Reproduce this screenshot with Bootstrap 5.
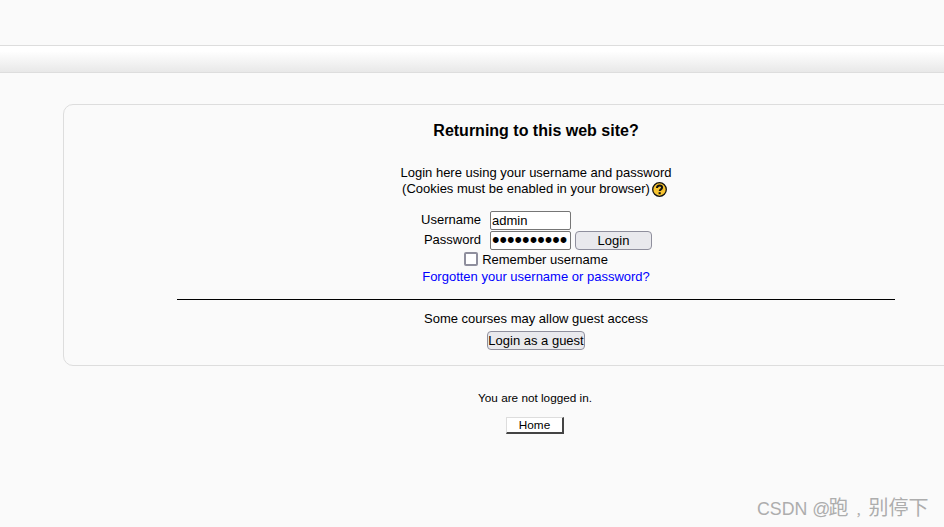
<!DOCTYPE html>
<html lang="en">
<head>
  <meta charset="UTF-8" />
  <meta name="viewport" content="width=device-width, initial-scale=1.0"/>
  <title>Login to the site</title>
  <link href="https://cdn.jsdelivr.net/npm/bootstrap@5.3.0/dist/css/bootstrap.min.css" rel="stylesheet"/>
  <style>
    html, body {
      height: 527px;
      overflow: hidden;
    }
    body {
      background-color: #fafafa;
      color: #000;
      font-family: "Liberation Sans", Arial, sans-serif;
      font-size: 13px;
      line-height: 16px;
    }
    .top-strip {
      height: 46px;
      border-bottom: 1px solid #ddd;
    }
    .crumb-strip {
      height: 27px;
      background: linear-gradient(#fff 0, #fff 20%, #e8e8e8 100%);
      border-bottom: 1px solid #ddd;
    }
    .login-panel {
      width: 946px;
      height: 262px;
      margin: 31px 0 0 63px;
      background: #fafafa;
      border: 1px solid #ddd;
      border-radius: 10px;
      padding-top: 16px;
      text-align: center;
    }
    .login-panel h2 {
      font-size: 16px;
      font-weight: 700;
      line-height: 19px;
      margin: 0 0 25px;
      font-family: inherit;
    }
    .login-intro {
      margin-bottom: 14px;
    }
    .help-mark {
      display: inline-block;
      vertical-align: -4px;
      margin: 0 3px 0 2px;
    }
    .field-rows {
      display: grid;
      grid-template-columns: 84px 81px 77px;
      column-gap: 4px;
      row-gap: 1px;
      margin-left: 338px;
      width: 260px;
      align-items: center;
    }
    .field-rows label {
      text-align: right;
      margin: -2px 5px 0 0;
    }
    .field-box {
      width: 81px;
      height: 19px;
      border: 1px solid #767676;
      border-radius: 2px;
      background: #fff;
      padding: 0 1px;
      font: 13px "Liberation Sans", Arial, sans-serif;
      color: #000;
      outline: 0;
    }
    .field-box[type=password] {
      font-size: 21.5px;
    }
    .plain-btn {
      height: 19px;
      padding: 0;
      font: 13px "Liberation Sans", Arial, sans-serif;
      line-height: 15px;
      color: #000;
      background: #e9e9ed;
      border: 1px solid #8f8f9d;
      border-radius: 4px;
      white-space: nowrap;
    }
    .field-spacer {
      height: 19px;
    }
    .remember-row {
      display: flex;
      justify-content: center;
      align-items: center;
      gap: 4px;
      height: 18px;
    }
    .remember-row label {
      padding-top: 1px;
    }
    .remember-box {
      appearance: none;
      width: 14px;
      height: 14px;
      border: 2px solid #8f8f9d;
      border-radius: 2px;
      background: #fff;
      margin: 0;
    }
    .forgot-link {
      display: block;
      color: #00f;
      text-decoration: none;
      height: 18px;
      line-height: 17px;
    }
    .panel-rule {
      width: 718px;
      height: 1px;
      background: #000;
      margin: 13px auto 0;
    }
    .guest-note {
      margin: 11px 0 4px;
      line-height: 16px;
    }
    .guest-btn {
      width: 98px;
    }
    .page-foot {
      width: 1070px;
      margin-top: 24px;
      text-align: center;
      font-size: 11.75px;
      line-height: 16px;
    }
    .home-btn {
      display: block;
      width: 58px;
      height: 17px;
      margin: 11px auto 0;
      padding: 0 0 1px;
      background: #fff;
      font: 11.75px/13px "Liberation Sans", Arial, sans-serif;
      color: #000;
      border: 1px solid #ddd;
      border-right: 2px solid #444;
      border-bottom: 2px solid #444;
    }
    .mark-csdn {
      position: absolute;
      left: 757px;
      top: 497px;
      font: 17.8px/22px "Liberation Sans", "Noto Sans CJK SC", sans-serif;
      color: #adadad;
      white-space: nowrap;
    }
    .mark-csdn em {
      font-style: normal;
      letter-spacing: -2px;
    }
    .mark-csdn span {
      font-size: 20px;
    }
    .mark-csdn i {
      font-style: normal;
      font-size: 13px;
      padding-left: 7px;
    }
  </style>
</head>
<body>

  <div class="top-strip"></div>
  <div class="crumb-strip"></div>

  <!-- Login box -->
  <div class="login-panel">
    <h2>Returning to this web site?</h2>
    <div class="login-intro">
      Login here using your username and password<br>
      (Cookies must be enabled in your browser)<svg class="help-mark" width="15" height="15" viewBox="0 0 15 15"><circle cx="7.500" cy="7.500" r="6.800" fill="#f7c430" stroke="#111" stroke-width="1.300"/><path d="M5 5.900c0-1.600 1.100-2.500 2.600-2.500s2.500.9 2.500 2.200c0 1.900-2.400 1.700-2.400 3.500" fill="none" stroke="#111" stroke-width="2"/><rect x="6.600" y="10.200" width="2.100" height="2" fill="#111"/></svg>
    </div>
    <form onsubmit="return false;">
      <div class="field-rows">
        <label for="username">Username</label>
        <input id="username" class="field-box" type="text" value="admin">
        <span class="field-spacer"></span>
        <label for="password">Password</label>
        <input id="password" class="field-box" type="password" value="1234567890">
        <button class="plain-btn" type="submit">Login</button>
      </div>
      <div class="remember-row">
        <input id="rememberusername" class="remember-box" type="checkbox">
        <label for="rememberusername">Remember username</label>
      </div>
      <a class="forgot-link" href="#">Forgotten your username or password?</a>
    </form>
    <div class="panel-rule"></div>
    <div class="guest-note">Some courses may allow guest access</div>
    <button class="plain-btn guest-btn" type="button">Login as a guest</button>
  </div>

  <div class="page-foot">
    You are not logged in.
    <button class="home-btn" type="button">Home</button>
  </div>

  <div class="mark-csdn">CSDN <em>@</em><span>跑<i>，</i>别停下</span></div>

  <script src="https://cdn.jsdelivr.net/npm/bootstrap@5.3.0/dist/js/bootstrap.bundle.min.js"></script>
</body>
</html>
